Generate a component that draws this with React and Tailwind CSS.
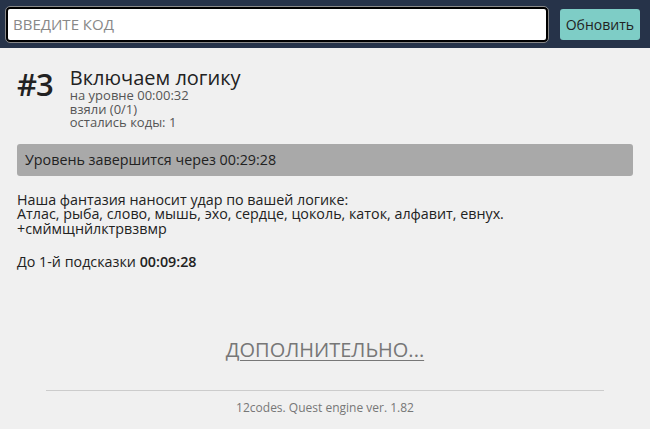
export default function App() {
  return (
    <div className="min-h-[429px] bg-[#f0f0f0] text-[#222]" style={{ fontFamily: '"Open Sans", "Noto Sans", sans-serif' }}>
      <div className="flex h-[48px] items-center gap-[12px] bg-[#263349] pl-[6px] pr-[10px]">
        <div className="flex h-[35px] flex-1 items-center rounded-[4px] border-2 border-black bg-white px-[5px] outline outline-1 outline-[#888]">
          <span className="text-[15px] text-[#888]">ВВЕДИТЕ КОД</span>
        </div>
        <button className="h-[31px] rounded-[3px] bg-[#7ecdc6] px-[6px] text-[14px] text-[#222]">Обновить</button>
      </div>

      <div className="px-[17px] pt-[18px]">
        <div className="flex gap-[17px]">
          <div className="text-[31px] font-semibold leading-[36px] tracking-[-1px]">#3</div>
          <div className="pt-[1px]">
            <div className="text-[20px] font-medium leading-[22px]">Включаем логику</div>
            <div className="text-[13px] leading-[13.5px] text-[#555]">
              <div>на уровне 00:00:32</div>
              <div>взяли (0/1)</div>
              <div>остались коды: 1</div>
            </div>
          </div>
        </div>

        <div className="mt-[14px] flex h-[32px] items-center rounded-[3px] bg-[#a9a9a9] px-[8px] text-[14.3px]">
          Уровень завершится через 00:29:28
        </div>

        <div className="mt-[17px] text-[14.3px] leading-[14.5px]">
          <div>Наша фантазия наносит удар по вашей логике:</div>
          <div>Атлас, рыба, слово, мышь, эхо, сердце, цоколь, каток, алфавит, евнух.</div>
          <div>+смймщнйлктрвзвмр</div>
        </div>

        <div className="mt-[18px] text-[14.3px] leading-[15px]">
          До 1-й подсказки <span className="font-semibold">00:09:28</span>
        </div>

        <div className="mt-[66px] text-center text-[20px] text-[#777] underline decoration-1 underline-offset-[3px]">
          ДОПОЛНИТЕЛЬНО...
        </div>

        <div className="mx-[29px] mt-[25px] border-t border-[#ccc] pt-[8px] text-center text-[12px] text-[#777]">
          12codes. Quest engine ver. 1.82
        </div>
      </div>
    </div>
  );
}
